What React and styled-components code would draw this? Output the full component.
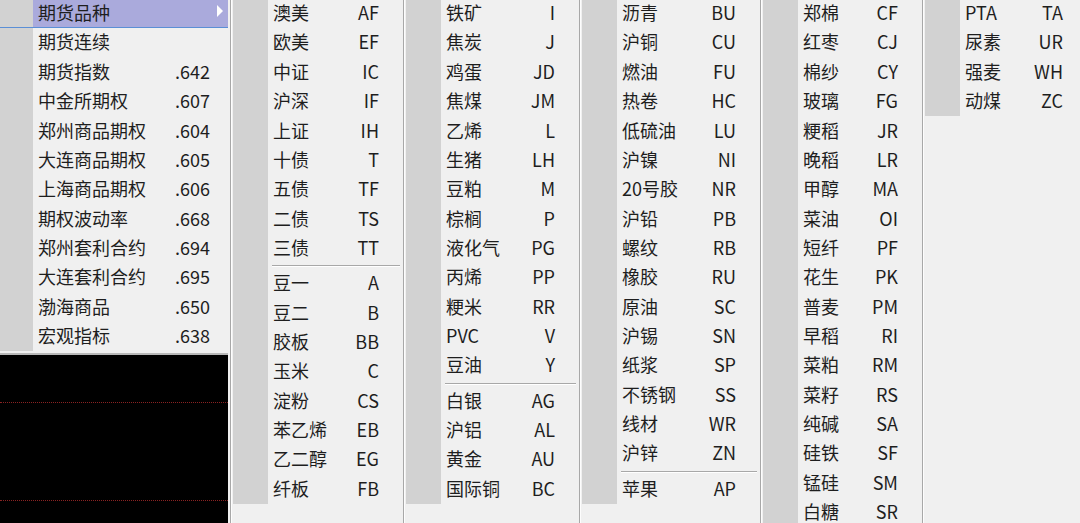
import React from 'react'
import styled, { createGlobalStyle } from 'styled-components'

const GlobalStyle = createGlobalStyle`
    html, body {
        margin: 0;
        padding: 0;
        background: #f0f0f0;
        overflow: hidden;
    }
    body {
        font-family: "Noto Sans CJK SC", "Noto Sans", sans-serif;
        font-size: 18px;
        color: #1e1e1e;
    }
`

const ROW = 29.36

const Screen = styled.div`
    display: flex;
    width: 1080px;
    height: 523px;
    overflow: hidden;
    align-items: stretch;
`

const LeftPane = styled.div`
    width: 228px;
    display: flex;
    flex-direction: column;
    flex-shrink: 0;
    margin-right: 2px;
`

const MainMenu = styled.div`
    margin-top: -1.6px;
    padding-bottom: 2px;
    background: #f0f0f0;
    border-bottom: 2px solid #b8b8b8;
`

const Chart = styled.div`
    flex: 1;
    background: #000;
    display: flex;
    flex-direction: column;
`

const GridLine = styled.div`
    margin-top: ${(p) => p.$gap}px;
    border-top: 1px dotted #8a2222;
`

const Column = styled.div`
    width: ${(p) => p.$width}px;
    flex-shrink: 0;
    background: #f0f0f0;
    border-left: 1px solid #a8a8a8;
    box-shadow: inset 1px 0 0 #fdfdfd;
    padding-left: 2px;
    box-sizing: border-box;
`

const Body = styled.div`
    display: flex;
    margin-top: ${(p) => (p.$flush ? 0 : -1.6)}px;
`

const Gutter = styled.div`
    width: ${(p) => p.$width || 35}px;
    flex-shrink: 0;
    background: #d2d2d2;
`

const List = styled.div`
    flex: 1;
    min-width: 0;
    display: flex;
    flex-direction: column;
`

const Row = styled.div`
    position: relative;
    height: ${ROW}px;
    display: flex;
    align-items: center;
    white-space: nowrap;
    background: ${(p) => (p.$active ? '#aaaadc' : 'transparent')};

    ${(p) =>
        p.$active &&
        `
        &::after {
            content: '';
            position: absolute;
            left: -33px;
            right: 0;
            bottom: 0;
            height: 1px;
            background: #5b8fd6;
        }
    `}
`

const Label = styled.span`
    flex: 1;
    padding-left: 5px;
    line-height: 1;
    margin-top: -2px;
`

const Code = styled.span`
    padding-right: ${(p) => p.$pad}px;
    line-height: 1;
    margin-top: -2px;
`

const ArrowSlot = styled.span`
    width: 18px;
    height: 100%;
    display: flex;
    align-items: center;
    justify-content: center;
`

const Arrow = styled.span`
    width: 0;
    height: 0;
    border-top: 6px solid transparent;
    border-bottom: 6px solid transparent;
    border-left: 6px solid #fff;
    margin-left: 2px;
    margin-top: -4px;
`

const Separator = styled.div`
    height: 6px;
    display: flex;
    align-items: center;
    padding-left: 4px;
    padding-right: 3px;

    &::before {
        content: '';
        flex: 1;
        height: 1px;
        background: #a8a8a8;
        box-shadow: 0 1px 0 #fff;
    }
`

const mainItems = [
    ['期货品种', '', true],
    ['期货连续', ''],
    ['期货指数', '.642'],
    ['中金所期权', '.607'],
    ['郑州商品期权', '.604'],
    ['大连商品期权', '.605'],
    ['上海商品期权', '.606'],
    ['期权波动率', '.668'],
    ['郑州套利合约', '.694'],
    ['大连套利合约', '.695'],
    ['渤海商品', '.650'],
    ['宏观指标', '.638'],
]

const columns = [
    {
        width: 173,
        items: [
            ['澳美', 'AF'], ['欧美', 'EF'], ['中证', 'IC'], ['沪深', 'IF'], ['上证', 'IH'],
            ['十债', 'T'], ['五债', 'TF'], ['二债', 'TS'], ['三债', 'TT'], '-',
            ['豆一', 'A'], ['豆二', 'B'], ['胶板', 'BB'], ['玉米', 'C'], ['淀粉', 'CS'],
            ['苯乙烯', 'EB'], ['乙二醇', 'EG'], ['纤板', 'FB'],
        ],
    },
    {
        width: 176,
        items: [
            ['铁矿', 'I'], ['焦炭', 'J'], ['鸡蛋', 'JD'], ['焦煤', 'JM'], ['乙烯', 'L'],
            ['生猪', 'LH'], ['豆粕', 'M'], ['棕榈', 'P'], ['液化气', 'PG'], ['丙烯', 'PP'],
            ['粳米', 'RR'], ['PVC', 'V'], ['豆油', 'Y'], '-',
            ['白银', 'AG'], ['沪铝', 'AL'], ['黄金', 'AU'], ['国际铜', 'BC'],
        ],
    },
    {
        width: 181,
        items: [
            ['沥青', 'BU'], ['沪铜', 'CU'], ['燃油', 'FU'], ['热卷', 'HC'], ['低硫油', 'LU'],
            ['沪镍', 'NI'], ['20号胶', 'NR'], ['沪铅', 'PB'], ['螺纹', 'RB'], ['橡胶', 'RU'],
            ['原油', 'SC'], ['沪锡', 'SN'], ['纸浆', 'SP'], ['不锈钢', 'SS'], ['线材', 'WR'],
            ['沪锌', 'ZN'], '-', ['苹果', 'AP'],
        ],
    },
    {
        width: 162,
        items: [
            ['郑棉', 'CF'], ['红枣', 'CJ'], ['棉纱', 'CY'], ['玻璃', 'FG'], ['粳稻', 'JR'],
            ['晚稻', 'LR'], ['甲醇', 'MA'], ['菜油', 'OI'], ['短纤', 'PF'], ['花生', 'PK'],
            ['普麦', 'PM'], ['早稻', 'RI'], ['菜粕', 'RM'], ['菜籽', 'RS'], ['纯碱', 'SA'],
            ['硅铁', 'SF'], ['锰硅', 'SM'], ['白糖', 'SR'],
        ],
    },
    {
        width: 165,
        items: [['PTA', 'TA'], ['尿素', 'UR'], ['强麦', 'WH'], ['动煤', 'ZC']],
    },
]

function SubColumn({ width, items }) {
    return (
        <Column $width={width}>
            <Body>
                <Gutter />
                <List>
                    {items.map((item, i) =>
                        item === '-' ? (
                            <Separator key={i} />
                        ) : (
                            <Row key={i}>
                                <Label>{item[0]}</Label>
                                <Code $pad={24}>{item[1]}</Code>
                            </Row>
                        )
                    )}
                </List>
            </Body>
        </Column>
    )
}

export default function App() {
    return (
        <Screen>
            <GlobalStyle />
            <LeftPane>
                <MainMenu>
                    <Body $flush>
                        <Gutter $width={33} />
                        <List>
                            {mainItems.map(([name, code, active]) => (
                                <Row key={name} $active={active}>
                                    <Label>{name}</Label>
                                    <Code $pad={0}>{code}</Code>
                                    <ArrowSlot>{active && <Arrow />}</ArrowSlot>
                                </Row>
                            ))}
                        </List>
                    </Body>
                </MainMenu>
                <Chart>
                    <GridLine $gap={47} />
                    <GridLine $gap={97} />
                </Chart>
            </LeftPane>
            {columns.map((col, i) => (
                <SubColumn key={i} width={col.width} items={col.items} />
            ))}
        </Screen>
    )
}
